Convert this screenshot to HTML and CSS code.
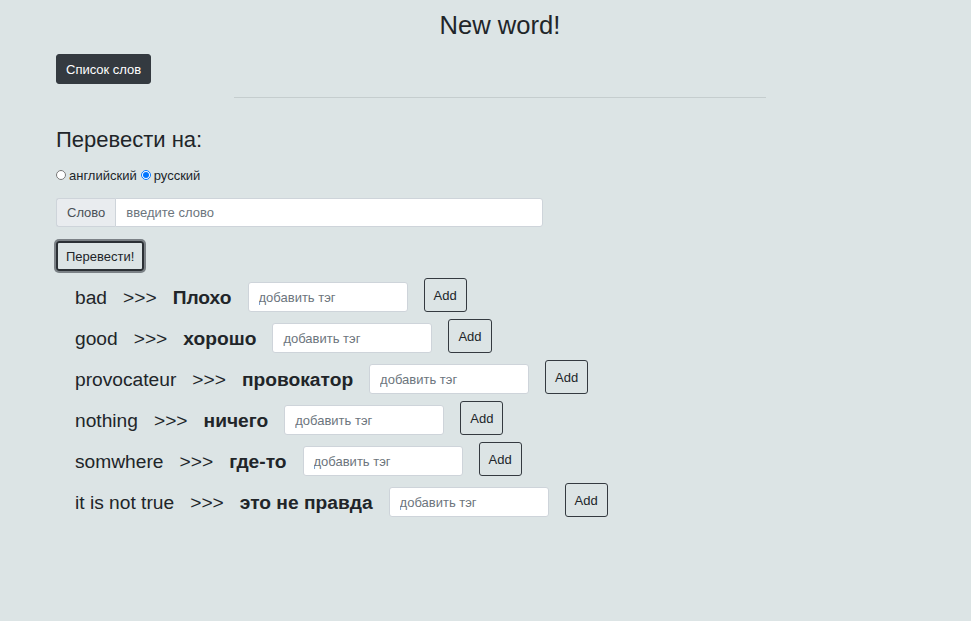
FILE: index.html
```html
<!DOCTYPE html>
<html lang="ru">
<head>
<meta charset="utf-8">
<title>New word!</title>
<link rel="stylesheet" href="styles.css">
</head>
<body>
<div class="container">
  <h1 class="title">New word!</h1>
  <button class="btn btn-dark">Список слов</button>
  <hr class="divider">
  <h2 class="subtitle">Перевести на:</h2>
  <div class="radios">
    <input type="radio" name="lang" id="en"><label for="en">английский</label>
    <input type="radio" name="lang" id="ru" class="second" checked><label for="ru">русский</label>
  </div>
  <div class="input-group">
    <span class="input-label">Слово</span>
    <input class="input-main" type="text" placeholder="введите слово">
  </div>
  <button class="btn btn-outline focused">Перевести!</button>
  <ul class="words">
    <li class="word-row"><span class="w">bad</span><span class="w">&gt;&gt;&gt;</span><b class="w">Плохо</b><input class="tag" placeholder="добавить тэг"><button class="btn-add">Add</button></li>
    <li class="word-row"><span class="w">good</span><span class="w">&gt;&gt;&gt;</span><b class="w">хорошо</b><input class="tag" placeholder="добавить тэг"><button class="btn-add">Add</button></li>
    <li class="word-row"><span class="w">provocateur</span><span class="w">&gt;&gt;&gt;</span><b class="w">провокатор</b><input class="tag" placeholder="добавить тэг"><button class="btn-add">Add</button></li>
    <li class="word-row"><span class="w">nothing</span><span class="w">&gt;&gt;&gt;</span><b class="w">ничего</b><input class="tag" placeholder="добавить тэг"><button class="btn-add">Add</button></li>
    <li class="word-row"><span class="w">somwhere</span><span class="w">&gt;&gt;&gt;</span><b class="w">где-то</b><input class="tag" placeholder="добавить тэг"><button class="btn-add">Add</button></li>
    <li class="word-row"><span class="w">it is not true</span><span class="w">&gt;&gt;&gt;</span><b class="w">это не правда</b><input class="tag" placeholder="добавить тэг"><button class="btn-add">Add</button></li>
  </ul>
</div>
</body>
</html>
```
FILE: styles.css
```css
html, body {
  margin: 0;
  padding: 0;
  background: #dce4e5;
  color: #212529;
  font-family: "Liberation Sans", Arial, sans-serif;
  font-size: 13px;
}
.container {
  margin: 0 27px 0 56px;
  padding-top: 10px;
  display: flex;
  flex-direction: column;
  align-items: flex-start;
}
.title {
  align-self: stretch;
  text-align: center;
  font-size: 25.6px;
  font-weight: 400;
  line-height: 30px;
  margin: 0 0 14px;
}
.btn {
  font-family: inherit;
  font-size: 13px;
  border-radius: 3px;
  cursor: pointer;
}
.btn-dark {
  background: #343a40;
  color: #fff;
  border: 1px solid #343a40;
  height: 30px;
  padding: 0 9px;
}
.divider {
  align-self: center;
  width: 60%;
  border: 0;
  border-top: 1px solid #c5cdce;
  margin: 13px 0 0;
}
.subtitle {
  font-size: 22px;
  font-weight: 400;
  line-height: 26px;
  margin: 29px 0 0;
}
.radios {
  display: flex;
  align-items: center;
  margin-top: 14px;
  height: 16px;
  font-size: 13px;
}
.radios input {
  width: 10px;
  height: 10px;
  margin: 0 3px 0 0;
}
.radios input.second {
  margin-left: 4px;
}
.input-group {
  display: flex;
  width: 487px;
  height: 29px;
  margin-top: 15px;
}
.input-label {
  display: flex;
  align-items: center;
  padding: 0 10px;
  background: #e9ecef;
  border: 1px solid #ced4da;
  border-right: 0;
  border-radius: 3px 0 0 3px;
  font-size: 13px;
  color: #495057;
}
.input-main {
  flex: 1;
  border: 1px solid #ced4da;
  border-radius: 0 3px 3px 0;
  background: #fff;
  padding: 0 10px;
  font-family: inherit;
  font-size: 13px;
  outline: none;
}
.input-main::placeholder, .tag::placeholder {
  color: #6c757d;
}
.btn-outline {
  margin-top: 14px;
  height: 30px;
  padding: 0 8px;
  background: transparent;
  color: #212529;
  border: 2px solid #2b3035;
}
.btn-outline.focused {
  box-shadow: 0 0 0 2px #7b8186;
}
.words {
  list-style: none;
  margin: 7px 0 0;
  padding: 0 0 0 19px;
}
.word-row {
  display: flex;
  align-items: flex-end;
  gap: 16px;
  margin-bottom: 7px;
}
.w {
  font-size: 19.2px;
  line-height: 28.5px;
}
b.w {
  font-weight: 700;
}
.tag {
  width: 160px;
  height: 30px;
  box-sizing: border-box;
  border: 1px solid #ced4da;
  border-radius: 3px;
  background: #fff;
  padding: 0 10px;
  font-family: inherit;
  font-size: 13px;
  outline: none;
}
.btn-add {
  height: 34px;
  padding: 0 9px;
  font-family: inherit;
  font-size: 13px;
  color: #212529;
  background: transparent;
  border: 1px solid #343a40;
  border-radius: 3px;
}
```
